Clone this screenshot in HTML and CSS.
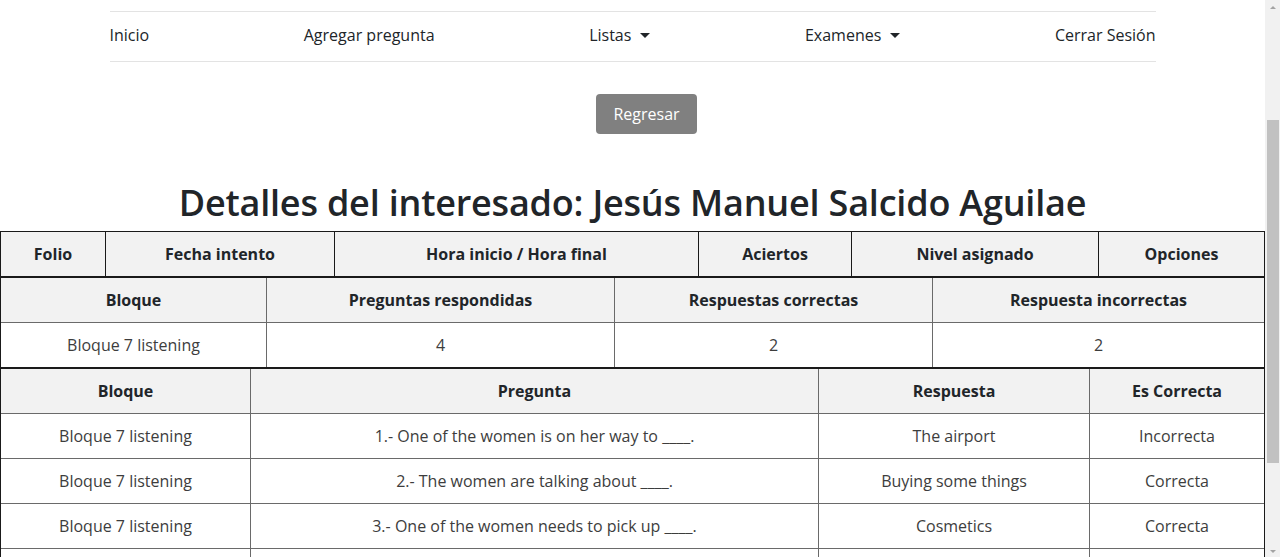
FILE: index.html
```html
<!DOCTYPE html>
<html lang="es">
<head>
<meta charset="utf-8">
<title>Detalles del interesado</title>
<link rel="stylesheet" href="styles.css">
</head>
<body>
<div class="page">
  <nav class="topnav">
    <a class="nav-link" href="#">Inicio</a>
    <a class="nav-link" href="#">Agregar pregunta</a>
    <a class="nav-link dropdown" href="#">Listas <span class="caret"></span></a>
    <a class="nav-link dropdown" href="#">Examenes <span class="caret"></span></a>
    <a class="nav-link" href="#">Cerrar Sesión</a>
  </nav>

  <div class="actions">
    <button class="btn-back" type="button">Regresar</button>
  </div>

  <h1 class="title">Detalles del interesado: Jesús Manuel Salcido Aguilae</h1>

  <table class="grid grid-first">
    <colgroup>
      <col class="c1a"><col class="c1b"><col class="c1c"><col class="c1d"><col class="c1e"><col>
    </colgroup>
    <thead>
      <tr>
        <th>Folio</th><th>Fecha intento</th><th>Hora inicio / Hora final</th><th>Aciertos</th><th>Nivel asignado</th><th>Opciones</th>
      </tr>
    </thead>
  </table>

  <table class="grid">
    <colgroup>
      <col class="c2a"><col class="c2b"><col class="c2c"><col>
    </colgroup>
    <thead>
      <tr><th>Bloque</th><th>Preguntas respondidas</th><th>Respuestas correctas</th><th>Respuesta incorrectas</th></tr>
    </thead>
    <tbody>
      <tr><td>Bloque 7 listening</td><td>4</td><td>2</td><td>2</td></tr>
    </tbody>
  </table>

  <table class="grid">
    <colgroup>
      <col class="c3a"><col class="c3b"><col class="c3c"><col>
    </colgroup>
    <thead>
      <tr><th>Bloque</th><th>Pregunta</th><th>Respuesta</th><th>Es Correcta</th></tr>
    </thead>
    <tbody>
      <tr><td>Bloque 7 listening</td><td>1.- One of the women is on her way to ____.</td><td>The airport</td><td>Incorrecta</td></tr>
      <tr><td>Bloque 7 listening</td><td>2.- The women are talking about ____.</td><td>Buying some things</td><td>Correcta</td></tr>
      <tr><td>Bloque 7 listening</td><td>3.- One of the women needs to pick up ____.</td><td>Cosmetics</td><td>Correcta</td></tr>
      <tr><td></td><td></td><td></td><td></td></tr>
    </tbody>
  </table>
</div>
<div class="scrollbar">
  <span class="sb-arrow sb-up"></span>
  <div class="sb-track"><div class="sb-thumb"></div></div>
  <span class="sb-arrow sb-down"></span>
</div>
</body>
</html>
```

FILE: styles.css
```css
html, body {
  margin: 0;
  padding: 0;
  height: 100%;
  overflow: hidden;
}
body {
  display: flex;
  font-family: "Open Sans", "Noto Sans", "Liberation Sans", sans-serif;
  font-size: 16px;
  color: #212529;
  background: #fff;
}
.page {
  flex: 1;
  min-width: 0;
  padding-top: 11px;
}
.topnav {
  width: 1046px;
  margin: 0 auto;
  height: 46px;
  padding-bottom: 3px;
  border-top: 1px solid #e3e3e3;
  border-bottom: 1px solid #e3e3e3;
  display: flex;
  justify-content: space-between;
  align-items: center;
}
.nav-link {
  color: #212529;
  text-decoration: none;
  line-height: 24px;
  display: flex;
  align-items: center;
}
.caret {
  display: inline-block;
  width: 0;
  height: 0;
  margin-left: 9px;
  border-left: 5px solid transparent;
  border-right: 5px solid transparent;
  border-top: 5px solid #212529;
  margin-top: 1px;
}
.actions {
  display: flex;
  justify-content: center;
  padding-left: 28px;
  margin-top: 32px;
}
.btn-back {
  width: 101px;
  height: 40px;
  background: #808080;
  color: #fff;
  border: none;
  border-radius: 4px;
  font-family: inherit;
  font-size: 16px;
  padding: 0;
}
.title {
  margin: 45px 0 4px;
  text-align: center;
  font-size: 36px;
  font-weight: 600;
  line-height: 48px;
  color: #212529;
  letter-spacing: -0.2px;
}
.grid {
  width: 100%;
  border-collapse: separate;
  border-spacing: 0;
  table-layout: fixed;
  border: 1px solid #1a1a1a;
}
.grid th, .grid td {
  height: 24px;
  padding: 10px 4px;
  text-align: center;
  line-height: 24px;
  border-right: 1px solid #6a6a6a;
  border-bottom: 1px solid #6a6a6a;
}
.grid tr > :last-child {
  border-right: none;
}
.grid tbody tr:last-child > td {
  border-bottom: none;
}
.grid-first th {
  border-color: #1a1a1a;
}
.grid-first thead tr:last-child > th {
  border-bottom: none;
}
.grid th {
  background: #f2f2f2;
  font-weight: 700;
  color: #212529;
}
.grid td {
  color: #3d3d3d;
  background: #fff;
}
.c1a { width: 105px; }
.c1b { width: 229px; }
.c1c { width: 364px; }
.c1d { width: 153px; }
.c1e { width: 247px; }
.c2a { width: 266px; }
.c2b { width: 348px; }
.c2c { width: 318px; }
.c3a { width: 250px; }
.c3b { width: 568px; }
.c3c { width: 271px; }

.scrollbar {
  width: 15px;
  flex: 0 0 15px;
  height: 100vh;
  background: #f1f1f1;
  display: flex;
  flex-direction: column;
  align-items: center;
}
.sb-arrow {
  width: 0;
  height: 0;
  border-left: 3px solid transparent;
  border-right: 3px solid transparent;
  flex: 0 0 auto;
}
.sb-up {
  border-bottom: 3px solid #a3a3a3;
  margin-top: 6px;
}
.sb-down {
  border-top: 3px solid #a3a3a3;
  margin-bottom: 4px;
}
.sb-track {
  flex: 1;
  width: 100%;
  display: flex;
  justify-content: center;
}
.sb-thumb {
  width: 12px;
  height: 343px;
  margin-top: 111px;
  background: #c1c1c1;
}
```
